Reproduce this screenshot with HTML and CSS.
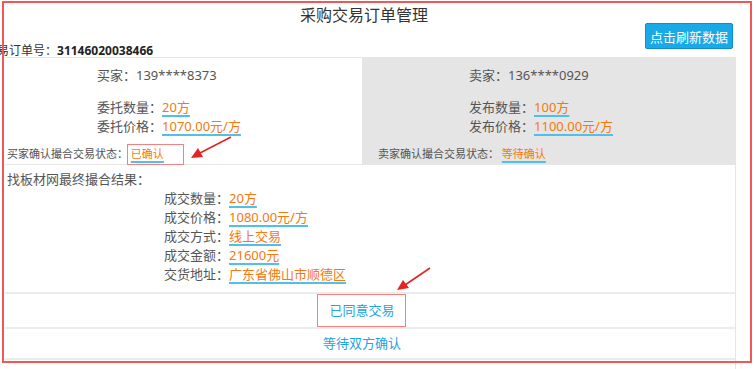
FILE: index.html
```html
<!DOCTYPE html>
<html lang="zh-CN">
<head>
    <meta charset="UTF-8">
    <meta name="viewport" content="width=device-width, initial-scale=1.0">
    <title>采购交易订单管理</title>
    <link rel="stylesheet" href="styles.css">
</head>
<body>
    <h1 class="title">采购交易订单管理</h1>
    <div class="toolbar">
        <div class="order-no">交易订单号：<b>31146020038466</b></div>
        <button class="refresh-btn">点击刷新数据</button>
    </div>

    <div class="panel">
        <div class="parties">
            <div class="party buyer">
                <div class="who">买家：139****8373</div>
                <div class="row">委托数量：<span class="val">20方</span></div>
                <div class="row">委托价格：<span class="val">1070.00元/方</span></div>
                <div class="status">买家确认撮合交易状态： <span class="val">已确认</span></div>
            </div>
            <div class="party seller">
                <div class="who">卖家：136****0929</div>
                <div class="row">发布数量：<span class="val">100方</span></div>
                <div class="row">发布价格：<span class="val">1100.00元/方</span></div>
                <div class="status">卖家确认撮合交易状态： <span class="val">等待确认</span></div>
            </div>
        </div>

        <div class="result">
            <div class="result-title">找板材网最终撮合结果：</div>
            <div class="result-rows">
                <div class="row">成交数量：<span class="val">20方</span></div>
                <div class="row">成交价格：<span class="val">1080.00元/方</span></div>
                <div class="row">成交方式：<span class="val">线上交易</span></div>
                <div class="row">成交金额：<span class="val">21600元</span></div>
                <div class="row">交货地址：<span class="val">广东省佛山市顺德区</span></div>
            </div>
        </div>

        <div class="action agreed">已同意交易</div>
        <div class="action waiting">等待双方确认</div>
    </div>

    <!-- annotations drawn over the screenshot -->
    <div class="frame"></div>
    <div class="mark mark-status"></div>
    <div class="mark mark-agreed"></div>
    <svg class="arrows" width="756" height="369" viewBox="0 0 756 369">
        <line x1="231" y1="137" x2="200" y2="153" stroke="#e62323" stroke-width="1.6"/>
        <polygon points="191,158 198,148 203,157" fill="#e62323"/>
        <line x1="430" y1="268" x2="405" y2="285" stroke="#e62323" stroke-width="1.6"/>
        <polygon points="397,290 403,280 409,288" fill="#e62323"/>
    </svg>
</body>
</html>
```

FILE: styles.css
```css
body {
    margin: 0;
    width: 756px;
    height: 369px;
    overflow: hidden;
    position: relative;
    background: #fff;
    color: #555;
    font-family: "Noto Sans", "Noto Sans CJK JP", sans-serif;
    font-size: 13px;
}
.title {
    margin: 4px 0 0;
    padding-right: 28px;
    height: 18px;
    font-size: 16px;
    font-weight: normal;
    line-height: 22px;
    text-align: center;
    color: #333;
}
.toolbar {
    display: flex;
    justify-content: space-between;
    align-items: flex-start;
    height: 35px;
}
.order-no {
    margin-left: -15px;
    margin-top: 22px;
    font-size: 12px;
    line-height: 14px;
    color: #333;
}
.order-no b {
    color: #222;
}
.refresh-btn {
    margin-top: 1px;
    margin-right: 23px;
    height: 26px;
    padding: 0 4px;
    background-color: #19a9e6;
    border: 1px solid #0f8fca;
    border-radius: 2px;
    color: #fff;
    font-family: inherit;
    font-size: 13px;
    cursor: pointer;
}
.panel {
    margin-left: 5px;
    width: 730px;
    height: 320px;
    border-top: 1px solid #e6e6e6;
    border-right: 1px solid #e6e6e6;
}
.parties {
    display: grid;
    grid-template-columns: 357px 1fr;
    height: 106px;
    border-bottom: 1px solid #e6e6e6;
}
.party {
    padding-top: 8px;
}
.buyer {
    background-color: #fff;
    padding-left: 92px;
}
.seller {
    background-color: #e5e5e5;
    padding-left: 107px;
}
.who, .row {
    line-height: 19px;
}
.who {
    margin-bottom: 13px;
}
.status {
    margin-top: 9px;
    font-size: 11px;
    line-height: 17px;
}
.buyer .status {
    margin-left: -90px;
}
.seller .status {
    margin-left: -91px;
}
.val {
    color: #f7780c;
    text-decoration: underline 2px #4fbfee;
    text-underline-offset: 3px;
}
.result {
    padding: 5px 0 12px 2px;
    height: 129px;
    box-sizing: border-box;
    border-bottom: 2px solid #ececec;
}
.result-title {
    line-height: 19px;
}
.result-rows {
    padding-left: 157px;
}
.action {
    padding-right: 16px;
    text-align: center;
    color: #25a3df;
    border-bottom: 2px solid #ececec;
}
.agreed {
    height: 33px;
    line-height: 33px;
}
.waiting {
    height: 29px;
    line-height: 29px;
}
.frame {
    position: absolute;
    left: 2px;
    top: 1px;
    width: 746px;
    height: 358px;
    border: 2px solid #f05757;
}
.mark {
    position: absolute;
    border: 1.5px solid #f28282;
}
.mark-status {
    left: 127px;
    top: 144px;
    width: 55px;
    height: 19px;
}
.mark-agreed {
    left: 317px;
    top: 294px;
    width: 87px;
    height: 31px;
}
.arrows {
    position: absolute;
    left: 0;
    top: 0;
    pointer-events: none;
}
```
